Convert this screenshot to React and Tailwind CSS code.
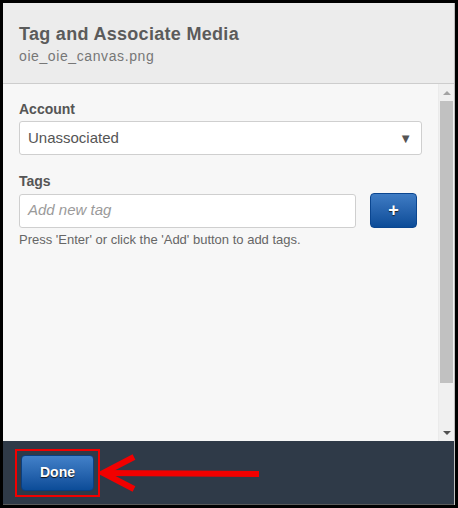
const font = { fontFamily: '"Liberation Sans", Arial, sans-serif' };

function Scrollbar() {
  return (
    <div className="w-[16px] flex flex-col items-center bg-[#f0f0f0] border-l border-[#ebebeb]">
      <div className="h-[17px] flex items-center justify-center">
        <div className="w-0 h-0 border-l-[4px] border-r-[4px] border-b-[4px] border-l-transparent border-r-transparent border-b-[#a3a3a3]" />
      </div>
      <div className="w-[13px] h-[282px] bg-[#c1c1c1]" />
      <div className="flex-1" />
      <div className="h-[17px] flex items-center justify-center">
        <div className="w-0 h-0 border-l-[4px] border-r-[4px] border-t-[4px] border-l-transparent border-r-transparent border-t-[#505050]" />
      </div>
    </div>
  );
}

export default function App() {
  return (
    <div className="w-[458px] h-[508px] bg-black pt-[3px] pl-[3px] pr-[3px] pb-[3px]" style={font}>
      <div className="h-full flex flex-col border-r border-[#bfbfbf]">
        {/* header */}
        <div className="h-[81px] bg-[#ececec] border-b border-[#cdcdcd] pl-[16px] pt-[20px]">
          <h1 className="text-[18px] font-bold text-[#5b5b5b] leading-[22px] tracking-[0.3px]">Tag and Associate Media</h1>
          <p className="text-[14px] text-[#777] leading-[18px] mt-[2px] tracking-[0.6px]">oie_oie_canvas.png</p>
        </div>

        {/* body */}
        <div className="flex-1 flex bg-[#f7f7f7] min-h-0">
          <div className="flex-1 pl-[16px] pr-[16px] pt-[16px]">
            <label className="block text-[14px] font-bold text-[#555] leading-[18px]">Account</label>
            <div className="mt-[3px] h-[34px] bg-white border border-[#cfcfcf] rounded-[3px] flex items-center justify-between pl-[8px] pr-[9px]">
              <span className="text-[15px] text-[#555]">Unassociated</span>
              <span className="text-[13px] text-[#555] leading-none">▼</span>
            </div>

            <label className="block mt-[17px] text-[14px] font-bold text-[#555] leading-[18px]">Tags</label>
            <div className="mt-[3px] flex items-center gap-[14px]">
              <div className="w-[337px] h-[34px] bg-white border border-[#cfcfcf] rounded-[3px] flex items-center pl-[8px]">
                <span className="text-[15px] italic text-[#9a9a9a]">Add new tag</span>
              </div>
              <button className="w-[47px] h-[35px] rounded-[4px] bg-gradient-to-b from-[#3f7cc4] to-[#0b4c98] border border-[#0b4690] flex items-center justify-center text-white text-[18px] font-bold [text-shadow:0_1px_1px_#222]">
                +
              </button>
            </div>
            <p className="mt-[4px] text-[13px] text-[#666] leading-[16px]">Press 'Enter' or click the 'Add' button to add tags.</p>
          </div>
          <Scrollbar />
        </div>

        {/* footer */}
        <div className="h-[64px] bg-[#2f3a48] flex items-center pl-[12px] border-b border-[#5a5a5a]">
          <div className="border-2 border-[#f20000] p-[4px]">
            <button className="w-[73px] h-[36px] rounded-[4px] bg-gradient-to-b from-[#4281c9] to-[#0b4c98] border border-[#0a3f80] text-white text-[14px] font-bold [text-shadow:0_1px_1px_#111]">
              Done
            </button>
          </div>
          <svg width="165" height="40" viewBox="0 0 165 40">
            <g stroke="#f20000" strokeWidth="6" fill="none" strokeLinecap="butt">
              <line x1="4" y1="20" x2="159" y2="21" />
              <polyline points="34,4 3,20 34,36" strokeLinejoin="miter" />
            </g>
          </svg>
        </div>
      </div>
    </div>
  );
}
